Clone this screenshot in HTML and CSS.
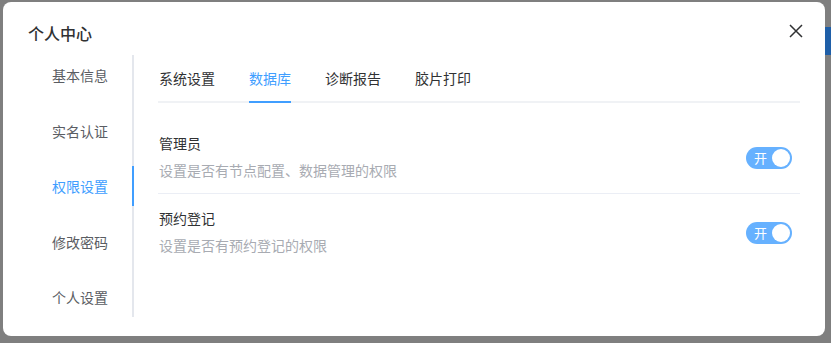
FILE: index.html
```html
<!DOCTYPE html>
<html lang="zh-CN">
<head>
   <meta charset="UTF-8">
   <meta name="viewport" content="width=device-width, initial-scale=1.0">
   <title>个人中心</title>
   <link rel="stylesheet" href="styles.css">
</head>
<body>
   <div class="dialog">
      <div class="dialog-header">
         <span class="dialog-title">个人中心</span>
         <button class="close-btn" aria-label="关闭">
            <svg width="14" height="14" viewBox="0 0 14 14">
               <path d="M1 1 L13 13 M13 1 L1 13" stroke="#303133" stroke-width="1.5" fill="none"/>
            </svg>
         </button>
      </div>
      <div class="dialog-body">
         <ul class="side-nav">
            <li class="nav-item">基本信息</li>
            <li class="nav-item">实名认证</li>
            <li class="nav-item active">权限设置</li>
            <li class="nav-item">修改密码</li>
            <li class="nav-item">个人设置</li>
         </ul>
         <div class="content">
            <div class="tabs">
               <div class="tab">系统设置</div>
               <div class="tab active">数据库</div>
               <div class="tab">诊断报告</div>
               <div class="tab">胶片打印</div>
            </div>
            <div class="settings">
               <div class="setting-row">
                  <div class="setting-text">
                     <div class="setting-name">管理员</div>
                     <div class="setting-desc">设置是否有节点配置、数据管理的权限</div>
                  </div>
                  <div class="switch"><span class="switch-label">开</span><span class="knob"></span></div>
               </div>
               <div class="setting-row">
                  <div class="setting-text">
                     <div class="setting-name">预约登记</div>
                     <div class="setting-desc">设置是否有预约登记的权限</div>
                  </div>
                  <div class="switch"><span class="switch-label">开</span><span class="knob"></span></div>
               </div>
            </div>
         </div>
      </div>
   </div>
   <div class="peek-btn"></div>
</body>
</html>
```

FILE: styles.css
```css
body{
    margin: 0;
    background: #7f7f7f;
    font-family: "Noto Sans CJK SC", "Noto Sans", sans-serif;
    display: flex;
    align-items: flex-start;
    height: 343px;
    overflow: hidden;
}

.dialog{
    margin: 2px 0 0 3px;
    width: 822px;
    height: 334px;
    background: #fff;
    border-radius: 8px;
    box-sizing: border-box;
}

.dialog-header{
    display: flex;
    justify-content: space-between;
    align-items: center;
    height: 53px;
    padding: 0 22px 0 25px;
}

.dialog-title{
    font-size: 16px;
    font-weight: 500;
    color: #303133;
    line-height: 24px;
    margin-top: 9px;
}

.close-btn{
    border: none;
    background: none;
    padding: 0;
    width: 14px;
    height: 14px;
    margin-top: 5px;
    cursor: pointer;
}

.dialog-body{
    display: flex;
}

.side-nav{
    list-style: none;
    margin: 0;
    padding: 0;
    width: 129px;
    border-right: 2px solid #e4e7ed;
    display: flex;
    flex-direction: column;
    gap: 15.5px;
}

.nav-item{
    height: 40px;
    line-height: 40px;
    font-size: 14px;
    color: #5a5d63;
    padding-left: 49px;
    position: relative;
}

.nav-item.active{
    color: #409eff;
}

.nav-item.active::after{
    content: "";
    position: absolute;
    right: -2px;
    top: 0;
    width: 2px;
    height: 40px;
    background: #409eff;
}

.content{
    flex: 1;
    padding: 6px 25px 0 24px;
}

.tabs{
    display: flex;
    gap: 34px;
    height: 40px;
    border-bottom: 2px solid #f0f2f5;
    padding-left: 1px;
}

.tab{
    font-size: 14px;
    color: #303133;
    line-height: 35px;
    position: relative;
}

.tab.active{
    color: #409eff;
}

.tab.active::after{
    content: "";
    position: absolute;
    left: 0;
    right: 0;
    bottom: -2px;
    height: 2px;
    background: #409eff;
}

.settings{
    margin-top: 16px;
}

.setting-row{
    display: flex;
    justify-content: space-between;
    align-items: center;
    padding: 13px 8px 12px 1px;
    border-bottom: 1px solid #ebeef5;
}

.setting-row:last-child{
    border-bottom: none;
}

.setting-name{
    font-size: 14px;
    color: #303133;
    line-height: 22px;
}

.setting-desc{
    font-size: 14px;
    color: #a8abb2;
    line-height: 22px;
    margin-top: 5px;
}

.switch{
    width: 46px;
    height: 22px;
    border-radius: 11px;
    background: #66b1ff;
    display: flex;
    align-items: center;
    justify-content: space-between;
    box-sizing: border-box;
    padding: 0 2px 0 8px;
    margin-top: 2px;
}

.switch-label{
    color: #fff;
    font-size: 13px;
    line-height: 22px;
}

.knob{
    width: 18px;
    height: 18px;
    border-radius: 50%;
    background: #fff;
}

.peek-btn{
    margin-top: 27px;
    width: 6px;
    height: 28px;
    background: #1f5fa8;
}
```
